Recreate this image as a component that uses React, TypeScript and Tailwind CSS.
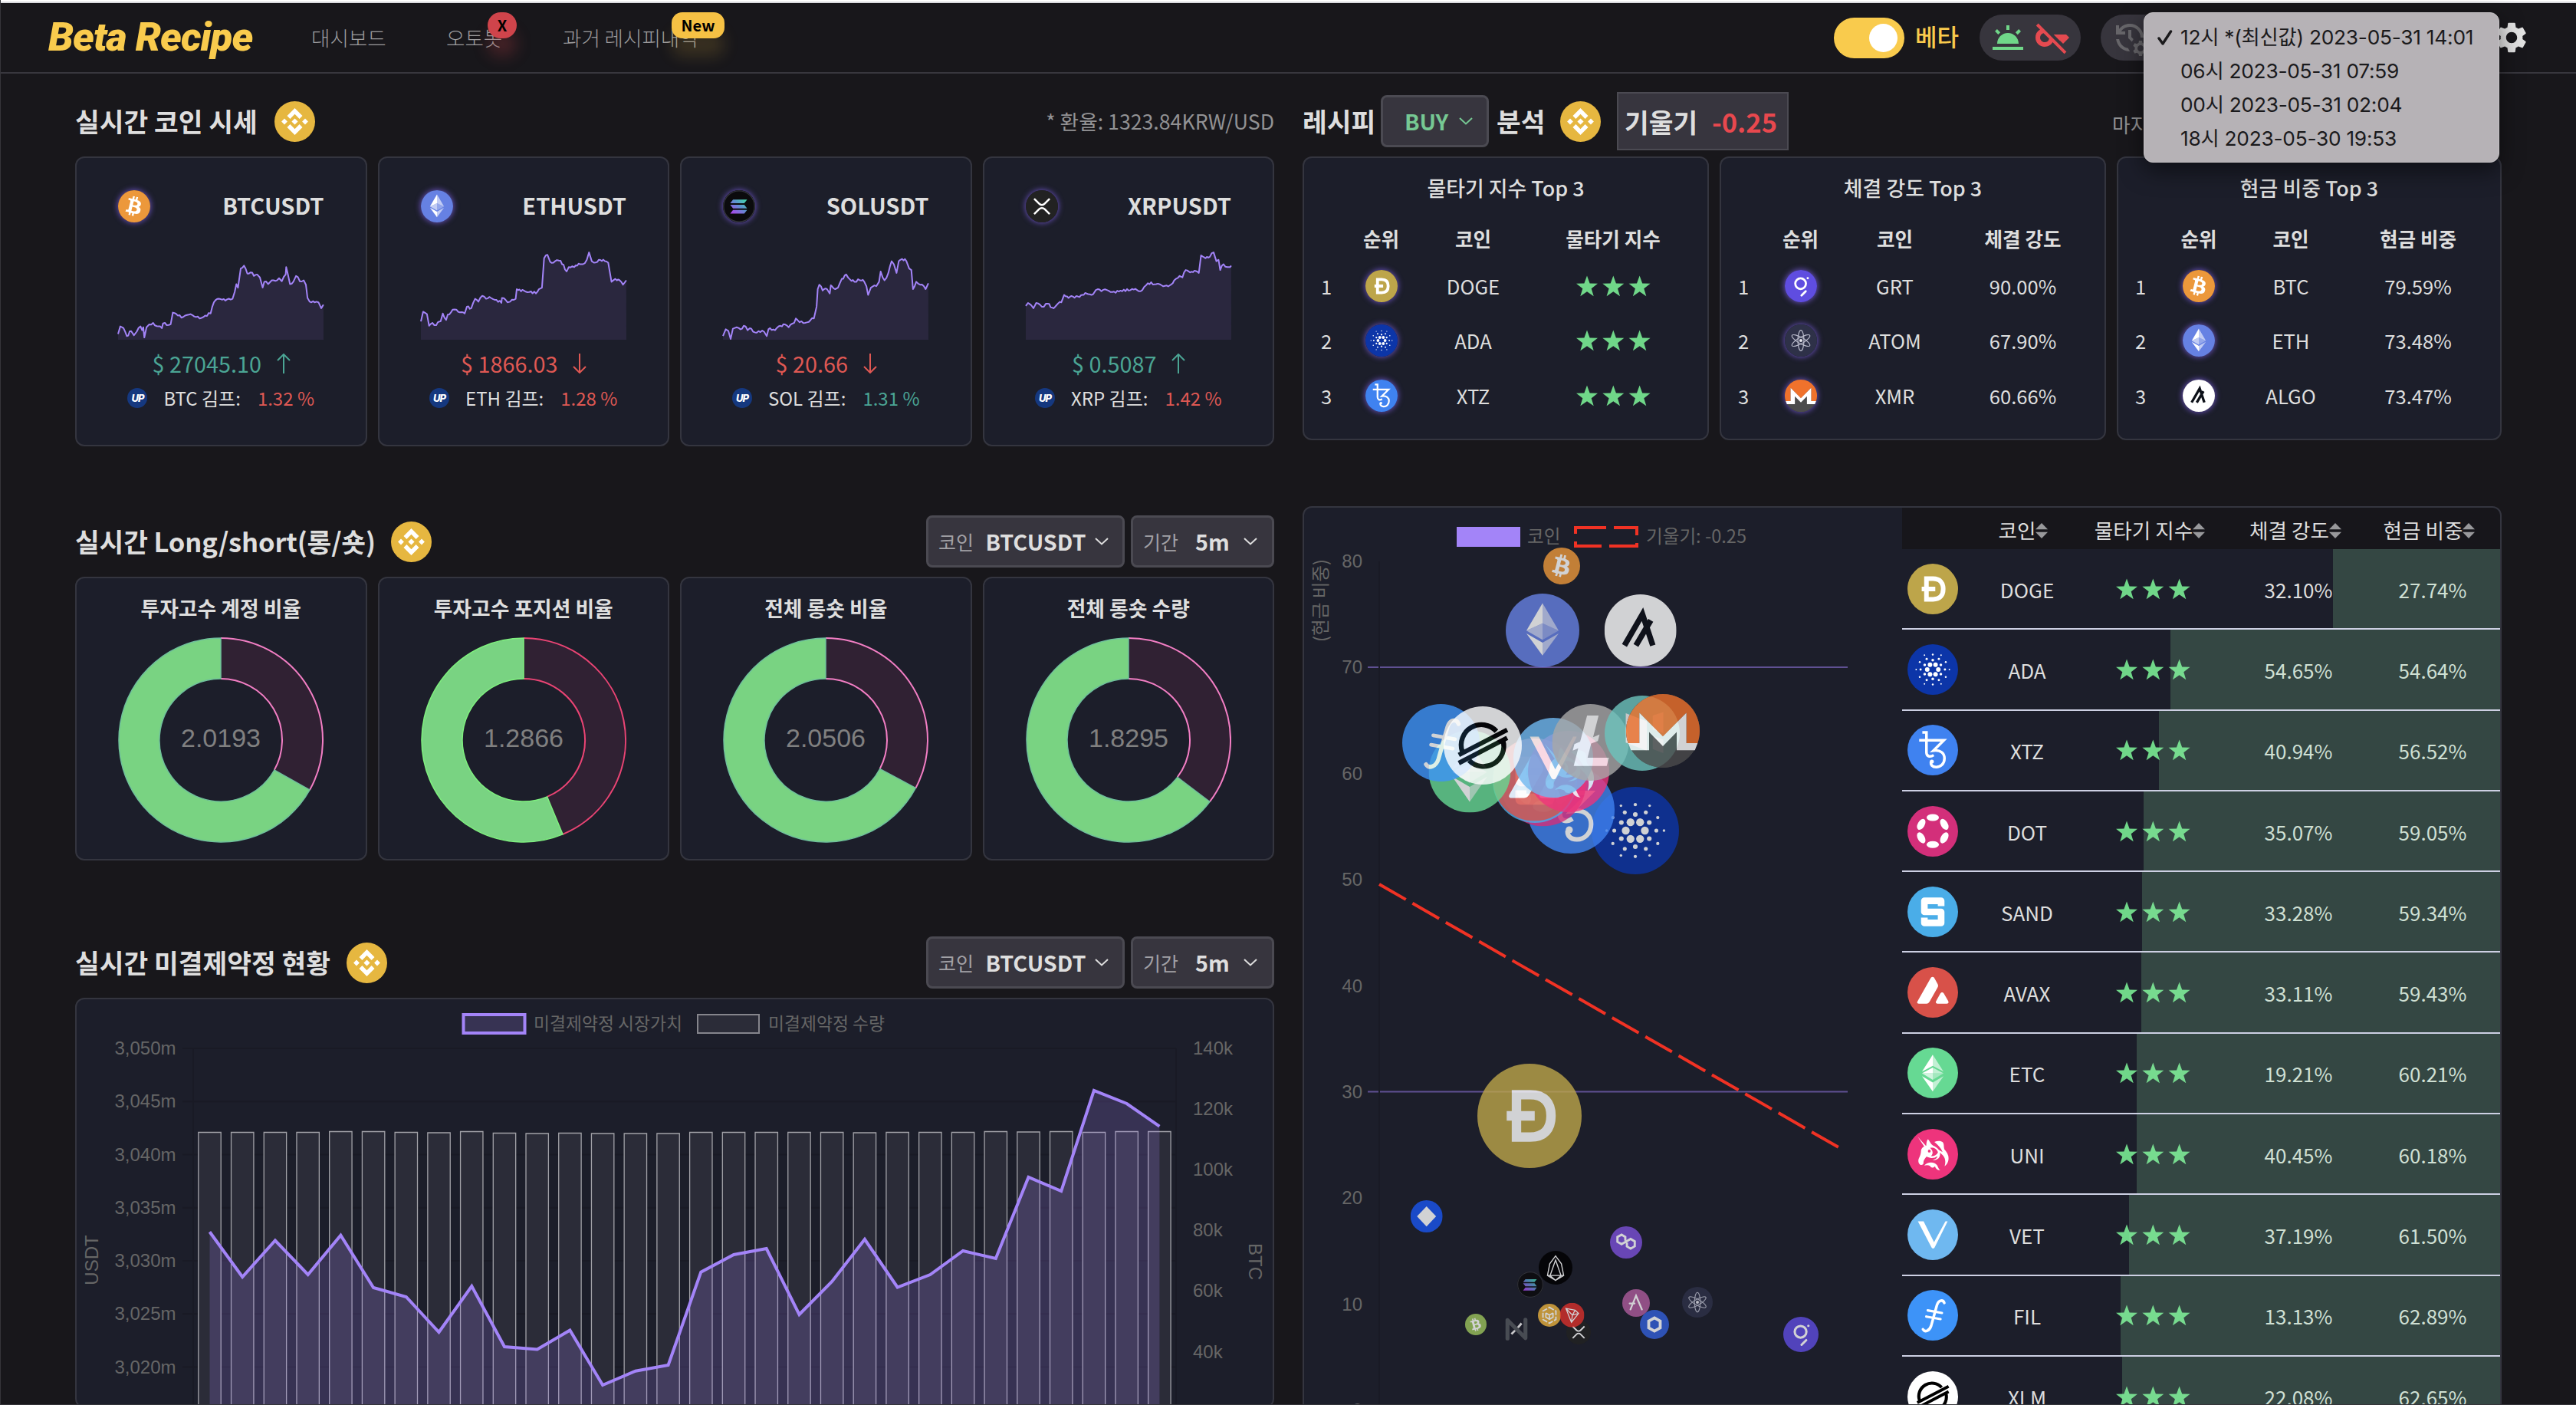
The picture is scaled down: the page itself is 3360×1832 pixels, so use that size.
import React from 'react';
import { MdKeyOff, MdManageHistory, MdSettings, MdWbTwilight } from 'react-icons/md';
import { FaBtc } from 'react-icons/fa';

const ring = (n: number, r: number, s: number, off = 0) =>
  Array.from({ length: n }, (_, i) => {
    const a = ((i * 360) / n + off) * (Math.PI / 180);
    return <circle key={`${r}-${off}-${i}`} cx={16 + r * Math.cos(a)} cy={16 + r * Math.sin(a)} r={s} />;
  });

const BG: Record<string, string> = {
  BTC: '#ec983b', ETH: '#6681e3', SOL: '#0b0b0d', XRP: '#222222', DOGE: '#bda54a', ADA: '#0c35a8', XTZ: '#3f82f0',
  GRT: '#5f4de0', ATOM: '#2e3148', ALGO: '#ffffff', DOT: '#d32f7a', SAND: '#4aade8', AVAX: '#d85149', ETC: '#66d993',
  UNI: '#ee347c', VET: '#6fb8f0', FIL: '#3d93f8', XLM: '#ffffff', LTC: '#a8a8a8', NEO: '#6cc4bd', MANA: '#1a56f0',
  MATIC: '#7c50d8', EOS: '#000000', BCH: '#9cc45c', BNB: '#e8b13f', TRX: '#d8302c', AR: '#ad5c9c', LINK: '#335fd8',
};

function glyph(id: string) {
  const s = { fill: 'none', stroke: '#fff', strokeLinecap: 'butt' as const, strokeLinejoin: 'miter' as const };
  switch (id) {
    case 'BTC':
      return <g transform="rotate(14 16 16)"><FaBtc size={19.5} x={6.2} y={6.2} color="#fff" /></g>;
    case 'BCH':
      return <g transform="rotate(-14 16 16)"><FaBtc size={19.5} x={6.2} y={6.2} color="#fff" /></g>;
    case 'ETH':
      return (
        <g fill="#fff">
          <path d="M16 4.2v8.7l-7 3.2z" /><path d="M16 4.2v8.7l7 3.2z" opacity=".6" />
          <path d="M16 12.9v7.2l-7-4z" opacity=".6" /><path d="M16 12.9v7.2l7-4z" opacity=".3" />
          <path d="M9 17.3l7 4v5.6z" /><path d="M23 17.3l-7 4v5.6z" opacity=".6" />
        </g>
      );
    case 'ETC':
      return (
        <g fill="#fff">
          <path d="M16 4.5v7l-6.8 3.6z" /><path d="M16 4.5v7l6.8 3.6z" opacity=".6" />
          <path d="M16 12.6v3.6H9.2z" /><path d="M16 12.6v3.6h6.8z" opacity=".6" />
          <path d="M9.2 16.2H16v4.2z" opacity=".7" /><path d="M22.8 16.2H16v4.2z" opacity=".4" />
          <path d="M9.2 18l6.8 4v5.8z" /><path d="M22.8 18L16 22v5.8z" opacity=".6" />
        </g>
      );
    case 'SOL':
      return (
        <g>
          <defs>
            <linearGradient id="sol" x1="0" y1="1" x2="1" y2="0"><stop offset="0" stopColor="#b43df0" /><stop offset=".55" stopColor="#5f8fd0" /><stop offset="1" stopColor="#3fe0a8" /></linearGradient>
          </defs>
          <circle cx="16" cy="16" r="15.4" fill="none" stroke="#34353c" strokeWidth="1" />
          <path d="M10 9.3h14l-2.8 3.6H7.2zM7.2 14.4h14l2.8 3.6H10zM10 19.6h14l-2.8 3.6H7.2z" fill="url(#sol)" />
        </g>
      );
    case 'XRP':
      return (
        <g {...s} strokeWidth="1.9">
          <path d="M8.3 8.5l5 5a3.8 3.8 0 0 0 5.4 0l5-5" /><path d="M8.3 23.8l5-5a3.8 3.8 0 0 1 5.4 0l5 5" />
        </g>
      );
    case 'DOGE':
      return <g {...s} strokeWidth="2.9"><path d="M12 9.5h4.2c4.4 0 6.4 2.5 6.4 6.5s-2 6.5-6.4 6.5H12zM9 16h8.6" /></g>;
    case 'ADA':
      return (
        <g fill="#fff">
          {ring(6, 3.5, 1.45)}{ring(6, 5.9, 0.86, 30)}{ring(6, 7.7, 0.72)}{ring(6, 9.5, 0.6, 30)}{ring(6, 10.5, 0.48)}
        </g>
      );
    case 'XTZ':
      return (
        <g {...s} strokeWidth="1.7">
          <path d="M9.4 4.9h2.600v12.500c0 2.600 2.200 3.400 4.600 1.800M7.400 9.800H23l-6.600 6.600c4.600-.6 7 1.600 7 4.800 0 3.600-2.600 5.600-5.200 5.600-2.600 0-3.600-1.600-3.400-3.200" />
          <circle cx="15.400" cy="23.300" r="1.300" fill="#fff" stroke="none" />
        </g>
      );
    case 'GRT':
      return (
        <g {...s} strokeWidth="2.1" strokeLinecap="round">
          <circle cx="15.7" cy="13.6" r="5.3" /><path d="M16.6 25.4l4.2-4.2" /><circle cx="22.8" cy="8.2" r="1.1" fill="#fff" stroke="none" />
        </g>
      );
    case 'ATOM':
      return (
        <g {...s} strokeWidth=".9" stroke="#b9bbcb">
          <ellipse cx="16" cy="16" rx="3" ry="10.2" /><ellipse cx="16" cy="16" rx="3" ry="10.2" transform="rotate(60 16 16)" />
          <ellipse cx="16" cy="16" rx="3" ry="10.2" transform="rotate(120 16 16)" /><circle cx="16" cy="16" r="1.6" fill="#e6e7ee" stroke="none" />
        </g>
      );
    case 'XMR':
      return (
        <g>
          <circle cx="16" cy="16" r="16" fill="#4c4c4c" />
          <path d="M16 0a16 16 0 0 0-15.1 21.3h4.9V8.2L16 18.6 26.2 8.2v13.1h4.9A16 16 0 0 0 16 0z" fill="#f0722c" />
          <path d="M.9 21.3h4.9V8.2L16 18.4 26.2 8.2v13.1h4.9l-1.2 3.1H22V16.5l-6 6.2-6-6.2v7.9H2.1z" fill="#fff" />
        </g>
      );
    case 'ALGO':
      return <g {...s} stroke="#0c1018" strokeWidth="2.5"><path d="M8.9 22.7l8-13.9 4.6 13.9M14 22.7l6.6-11.2" /></g>;
    case 'DOT':
      return (
        <g fill="#fff">
          <ellipse cx="16" cy="7.3" rx="3.9" ry="2.2" /><ellipse cx="16" cy="24.4" rx="3.9" ry="2.2" />
          {[[8.7, 11.6, 30], [23.3, 11.6, -30], [8.7, 20.1, -30], [23.3, 20.1, 30]].map(([x, y, r]) => (
            <ellipse key={`${x}${y}`} cx={x} cy={y} rx="2.2" ry="3.8" transform={`rotate(${r} ${x} ${y})`} />
          ))}
        </g>
      );
    case 'SAND':
      return <g {...s} strokeWidth="4.2"><path d="M21.300 12.400V9H10.700v7h10.600v7H10.700v-3.400" strokeLinejoin="round" /></g>;
    case 'AVAX':
      return <path d="M15.9 6.2c-.6 0-1 .4-1.4 1.1L6.4 21.6c-.6 1-.2 1.5.8 1.5h4.8c1 0 1.5-.5 2-1.3l5-8.8c.5-.9.5-1.6 0-2.5l-1.8-3.2c-.4-.7-.7-1.1-1.3-1.1zM21.9 16c-.5 0-.9.3-1.2.9l-2.5 4.4c-.6 1.1-.2 1.8.8 1.8h5.8c1 0 1.5-.7.9-1.8l-2.6-4.4c-.3-.6-.7-.9-1.2-.9z" fill="#fff" />;
    case 'UNI':
      return (
        <g>
          <path d="M6.500 5l6 6.600-1 .9zM11.900 10.500c.1-1.700.2-3 1-3.900 1.300 1 1.500 2.900 3.300 4 2.900 1.200 4.700 3.200 4.400 5.900-.4 2.600-2.700 3.400-4.900 3.300 1.500-.4 3.100-1.200 3.200-2.600-1.900 1.600-5 1.500-6.800.3-1.100 1.300-2.100 2.400-2 4 .1 1-.8 1.500-1.700 1.300-1.500-.6-1.900-2.800-1.100-4.400.9-1.600 1.200-3 1.300-4.700.2-1.700 1.700-2.700 3.300-3.200z" fill="#fff" />
          <circle cx="13.800" cy="14" r=".9" fill="#ee347c" />
          <path d="M14.300 12c2.500-.6 4.300.6 5 2.800-.8 1.900-2.600 2.600-4.400 2.400 1.500-1.400 1.300-3.600-.6-5.200z" fill="#ee347c" />
          <path d="M17 8.300c2-1 4.200-.9 5.400.2.900 1.200.4 2.800.9 4.300 1.800 2 3 4 2.600 6.800-.3 1.700-1.100 3-2.400 4 .8-2.900.5-5.100-1.200-7-1.500-1.600-3.400-2.400-4.400-4.200 1.600.9 3 1.400 4.300 2.300-.9-2.400-2.800-4.600-5.200-6.400z" fill="#fff" />
          <path d="M10.600 23.200c1.700-1.900 4.200-2.500 6.600-1.500 2.200 1 2 3.200 3.500 4.500-1.900-.1-2.900-1.200-3.300-2.600-.9 1.200-2.600 1.200-3.100-.2-1.100-.6-2.500-.6-3.700-.2z" fill="#fff" />
        </g>
      );
    case 'VET':
      return <path d="M6.6 7.500h3.600l6.600 13.200L24 7.500h1.400L17.200 24c-.4.900-1.600.9-2 0z" fill="#fff" />;
    case 'FIL':
      return (
        <g {...s} strokeWidth="1.500" strokeLinecap="round">
          <path d="M23.300 8.200c-.8-2.200-3.500-2-4.600 1.200L15 22.600c-1 3.200-3.900 4.400-5.200 2.300" strokeWidth="1.700" /><path d="M12.800 12.900l9 1.600M11.900 16.800l9 1.600" />
        </g>
      );
    case 'XLM':
      return (
        <g {...s} stroke="#000" strokeWidth="2">
          <path d="M7.600 18.400A8.300 8.300 0 0 1 21.600 10.200M24.300 14A8.300 8.300 0 0 1 10.400 22.100" /><path d="M6.200 21.200L26 10.900M6.200 24.500L26 14.200" transform="translate(0 -1.300)" strokeWidth="1.900" />
        </g>
      );
    case 'LTC':
      return <g fill="#fff"><path d="M14.600 4.800h4.800l-2.300 9 2.700-1.100-.7 2.700-2.800 1.100-1.500 5.900h8.900l-.9 3.400H9l1.900-7.300-2.300.9.700-2.700 2.400-1z" /></g>;
    case 'NEO':
      return <g fill="#f0f0f0"><path d="M9 7.500l9 3.400v12.600L9 20z" /><path d="M20.500 8.500L25 7v9l-4.500-1.600z" opacity=".6" /><path d="M20.500 17.200L25 18.800v5.700l-4.500-1.700z" opacity=".7" /></g>;
    case 'MANA':
      return <path d="M16 6l9.500 10L16 26 6.500 16z" fill="#fff" />;
    case 'MATIC':
      return (
        <g {...s} strokeWidth="2.200">
          <path d="M15.200 14.200v-3.600L11.500 8.300 7.400 10.600v4.800l4.100 2.400 9-5.200 4.100 2.400v4.800l-4.100 2.400-3.700-2.300v-3.700" />
        </g>
      );
    case 'EOS':
      return <g {...s} strokeWidth="1"><path d="M16 4.800l-5.500 7.400L8.300 23.400 16 28l7.700-4.600-2.200-11.200zM16 8.800l-5.200 14.600L16 28l5.200-4.600zM8.300 23.400h15.400" /></g>;
    case 'BNB':
      return <g {...s} strokeWidth="2"><path d="M16 5l9 5.200v11.600L16 27l-9-5.200V10.200z" strokeDasharray="7 2" /><path d="M11 12.800l5 2.900 5-2.900M16 15.700v5.600M11 12.800v5.800l5 2.900 5-2.900v-5.800" strokeWidth="1.800" /></g>;
    case 'TRX':
      return <g {...s} strokeWidth="1.300"><path d="M8 7.500l12 2.200 4.500 4.200L15.200 25.500zM8 7.500l8.500 8.500L15.200 25.500M16.500 16l8-2.100M16.500 16L20 9.700" /></g>;
    case 'AR':
      return <g {...s} strokeWidth="2" strokeLinecap="round"><path d="M9.500 23.500L16 7.500l6.800 16M8.500 16.500h5.800" /></g>;
    case 'LINK':
      return <g {...s} strokeWidth="3.200"><path d="M16 8.800l6.300 3.600v7.200L16 23.200l-6.300-3.600v-7.200z" /></g>;
    default:
      return null;
  }
}

function Coin({ id, ...rest }: { id: string } & React.SVGProps<SVGSVGElement>) {
  if (id === 'NEAR') {
    return (
      <svg viewBox="0 0 32 32" {...rest}>
        <path d="M3.500 29V3.500L28.500 28.500V3" fill="none" stroke="#54585e" strokeWidth="5.500" strokeLinejoin="round" strokeLinecap="round" />
        <path d="M9 23l5-5M18 14l5-6" stroke="#f2f2f2" strokeWidth="3" />
      </svg>
    );
  }
  return (
    <svg viewBox="0 0 32 32" {...rest}>
      <circle cx="16" cy="16" r="16" fill={BG[id] ?? '#4c4c4c'} />
      {glyph(id)}
    </svg>
  );
}

function SmallCoin({ id }: { id: string }) {
  return (
    <span className="inline-flex h-[42px] w-[42px] rounded-full shadow-[0_0_7px_1px_rgba(122,92,220,0.75)]">
      <Coin id={id} className="h-full w-full" />
    </span>
  );
}

function BinanceBadge({ className = '' }: { className?: string }) {
  return (
    <svg viewBox="0 0 53 53" className={`h-[53px] w-[53px] shrink-0 ${className}`}>
      <circle cx="26.500" cy="26.500" r="26.500" fill="#e6b740" />
      <g fill="#fff">
        <path d="M26.500 9l10 10-3.900 4-6.100-6.200-6.100 6.200-3.900-4z" />
        <path d="M26.500 44l10-10-3.900-4-6.100 6.200-6.100-6.200-3.900 4z" />
        <path d="M26.500 22.400l4.100 4.100-4.100 4.100-4.100-4.100zM13 22.600l3.900 3.900-3.900 3.900-3.900-3.900zM40 22.600l3.900 3.900-3.900 3.900-3.900-3.900z" />
      </g>
    </svg>
  );
}

function Chevron() {
  return (
    <svg viewBox="0 0 18 10" className="h-[10px] w-[18px]" fill="none" stroke="currentColor" strokeWidth="2">
      <path d="M1 1l8 7.500L17 1" />
    </svg>
  );
}

const TITLE = 'text-[34.500px] font-bold text-[#dedede] whitespace-nowrap leading-none';
const CARD = 'rounded-[12px] border-2 border-[#34353f] bg-[#1c1e2a]';
const SELECT = 'flex h-[68px] items-center rounded-[8px] border-[3px] border-[#4b4a52] bg-[#37353e] whitespace-nowrap leading-none';

const SPARK: Record<string, { x0: number; pts: number[] }> = {
  BTC: { x0: 216, pts: [216,1138,220,1112,226,1118,232,1145,240,1128,245,1142,250,1130,257,1112,260,1125,262,1115,264,1150,268,1115,273,1105,280,1100,290,1112,296,1118,298,1102,305,1108,312,1105,316,1065,325,1075,335,1080,345,1072,355,1078,365,1085,375,1075,385,1068,391,1030,400,1018,415,1020,425,1018,429,995,432,968,435,980,440,915,446,905,452,932,458,928,464,940,470,935,475,945,480,980,483,960,490,968,500,955,510,948,515,958,522,935,523,910,530,968,536,960,541,940,548,958,555,955,559,970,562,1015,566,1028,575,1030,582,1030,587,1050,591,1038] },
  ETH: { x0: 767, pts: [767,1095,771,1062,778,1070,782,1110,788,1100,795,1108,803,1095,807,1068,813,1090,816,1072,825,1055,835,1062,847,1068,851,1045,859,1050,866,1018,872,1028,879,1008,886,1018,895,1015,905,1022,914,1032,915,1015,925,1030,930,1028,940,1018,942,985,955,990,965,995,977,1000,988,980,992,880,998,868,1003,892,1012,890,1022,888,1033,925,1037,910,1047,910,1055,898,1063,900,1070,885,1074,860,1079,890,1083,895,1092,885,1103,890,1109,895,1115,960,1122,950,1130,955,1136,970,1142,955] },
  SOL: { x0: 1320, pts: [1320,1145,1325,1122,1330,1128,1334,1155,1338,1120,1345,1115,1352,1122,1358,1110,1365,1125,1369,1118,1375,1130,1385,1128,1395,1130,1400,1145,1403,1122,1415,1125,1425,1110,1433,1105,1440,1115,1450,1100,1453,1085,1460,1098,1470,1100,1480,1090,1486,1085,1491,1045,1493,985,1496,970,1502,990,1510,985,1515,1000,1517,972,1525,985,1530,980,1537,950,1545,935,1552,952,1560,960,1570,955,1578,960,1582,975,1585,1005,1590,980,1600,975,1605,960,1608,925,1615,955,1622,930,1628,890,1632,900,1637,930,1641,890,1647,882,1655,890,1660,915,1664,920,1667,985,1673,960,1680,970,1687,975,1690,985,1695,965] },
  XRP: { x0: 332, pts: [332,1042,336,1032,342,1040,346,1050,351,1032,358,1038,365,1045,372,1035,380,1048,388,1040,397,1030,402,1005,410,1015,418,1010,430,1012,443,1000,455,1002,460,988,470,992,480,988,490,995,505,990,520,990,535,988,545,988,555,965,570,968,580,972,595,972,603,955,613,940,618,945,624,920,632,928,640,922,648,930,652,870,660,880,668,875,675,860,680,890,684,885,687,920,693,900,700,910,705,910,707,905] },
};

function Sparkline({ id }: { id: string }) {
  const { x0, pts } = SPARK[id];
  const out: string[] = [];
  let n = 7;
  for (let i = 0; i < pts.length; i += 2) {
    const x = (pts[i] - x0) / 1.4;
    const y = (pts[i + 1] - 857) / 2.613 + 1;
    if (i > 0) {
      const px = (pts[i - 2] - x0) / 1.4;
      const py = (pts[i - 1] - 857) / 2.613 + 1;
      const k = Math.floor((x - px) / 1.8);
      for (let j = 1; j < k; j++) {
        n = (n * 73 + 41) % 101;
        out.push(`${(px + ((x - px) * j) / k).toFixed(1)},${(py + ((y - py) * j) / k + (n / 101 - 0.5) * 4).toFixed(1)}`);
      }
    }
    out.push(`${x.toFixed(1)},${y.toFixed(1)}`);
  }
  return (
    <svg viewBox="0 0 268 116" className="block h-[116px] w-[268px] overflow-visible">
      <polygon points={`0,116 ${out.join(' ')} 268,116`} fill="#2a273e" />
      <polyline points={out.join(' ')} fill="none" stroke="#a384f8" strokeWidth="2" strokeLinejoin="round" />
    </svg>
  );
}

const PRICES = [
  { id: 'BTC', price: '27045.10', up: true, kimp: '1.32 %', pos: false },
  { id: 'ETH', price: '1866.03', up: false, kimp: '1.28 %', pos: false },
  { id: 'SOL', price: '20.66', up: false, kimp: '1.31 %', pos: true },
  { id: 'XRP', price: '0.5087', up: true, kimp: '1.42 %', pos: false },
];

function PriceCard({ id, price, up, kimp, pos }: (typeof PRICES)[number]) {
  return (
    <div className={`${CARD} flex h-[378px] flex-col px-[54px] pt-[42px]`}>
      <div className="flex h-[42px] items-center justify-between">
        <SmallCoin id={id} />
        <span className="pb-[2px] text-[29.100px] font-bold leading-none text-[#dedede]">{id}USDT</span>
      </div>
      <div className="mt-[37px]"><Sparkline id={id} /></div>
      <div className={`mt-[11px] flex h-[40px] items-center justify-center pl-[1px] text-[28.800px] leading-none whitespace-nowrap ${up ? 'text-[#4ba594]' : 'text-[#df5853]'}`}>
        <span>$ {price}</span>
        <svg viewBox="0 0 18 26" className="ml-[20px] h-[26px] w-[18px]" fill="none" stroke="currentColor" strokeWidth="2">
          {up ? <path d="M9 26V1M1 9l8-8 8 8" /> : <path d="M9 0v25M1 17l8 8 8-8" />}
        </svg>
      </div>
      <div className="mt-[9px] flex h-[32px] items-center justify-center text-[24px] leading-none whitespace-nowrap text-[#dedede]">
        <span className="flex h-[26px] w-[26px] items-center justify-center rounded-full bg-[#15387f] font-['Inter'] text-[13px] font-extrabold italic tracking-[-1px] text-white">UP</span>
        <span className="ml-[21px]">{id} 김프:</span>
        <span className={`ml-[22px] ${pos ? 'text-[#4ba594]' : 'text-[#df5853]'}`}>{kimp}</span>
      </div>
    </div>
  );
}

const DONUTS = [
  { name: '투자고수 계정 비율', v: 2.0193, line: '#f27ec4', edge: '#6fc09c' },
  { name: '투자고수 포지션 비율', v: 1.2866, line: '#ea4474', edge: '#7ff07f' },
  { name: '전체 롱숏 비율', v: 2.0506, line: '#f27ec4', edge: '#6fc09c' },
  { name: '전체 롱숏 수량', v: 1.8295, line: '#f27ec4', edge: '#6fc09c' },
];

function Donut({ v, line, edge }: { v: number; line: string; edge: string }) {
  const a = (2 * Math.PI) / (1 + v);
  const R = 133;
  const r = 80;
  const p = (rad: number, t: number) => `${(134 + rad * Math.sin(t)).toFixed(2)} ${(135 - rad * Math.cos(t)).toFixed(2)}`;
  return (
    <svg viewBox="0 0 268 270" className="h-[270px] w-[268px]">
      <path d={`M${p(R, 0)}A${R} ${R} 0 0 1 ${p(R, a)}L${p(r, a)}A${r} ${r} 0 0 0 ${p(r, 0)}z`} fill="#302133" />
      <path d={`M${p(R, 0)}A${R} ${R} 0 0 1 ${p(R, a)}M${p(r, a)}A${r} ${r} 0 0 0 ${p(r, 0)}`} fill="none" stroke={line} strokeWidth="2" />
      <path d={`M${p(R, a)}A${R} ${R} 0 1 1 ${p(R, 0)}L${p(r, 0)}A${r} ${r} 0 1 0 ${p(r, a)}z`} fill="#79d382" stroke={edge} strokeWidth="1.500" />
      <text x="134" y="144" textAnchor="middle" fontFamily="Liberation Sans, Arial, sans-serif" fontSize="34" fill="#808080">{v.toFixed(4)}</text>
    </svg>
  );
}

function Selects() {
  return (
    <div className="ml-auto flex gap-[8px]">
      <div className={`${SELECT} w-[259px] pl-[13px]`}>
        <span className="w-[60px] text-[25px] text-[#a2a1a6]">코인</span>
        <span className="w-[134px] text-center text-[28.800px] font-bold text-[#dedede]">BTCUSDT</span>
        <span className="ml-[10px] text-[#dedede]"><Chevron /></span>
      </div>
      <div className={`${SELECT} w-[187px] pl-[13px]`}>
        <span className="w-[68px] text-[25px] text-[#a2a1a6]">기간</span>
        <span className="w-[44px] text-center text-[28.800px] font-bold text-[#dedede]">5m</span>
        <span className="ml-[19px] text-[#dedede]"><Chevron /></span>
      </div>
    </div>
  );
}

const OI = [1606.3,1665,1617.5,1662,1610.7,1679,1691,1737,1677,1756,1759.5,1734.5,1806,1787.7,1780,1658.7,1636,1628,1714,1671,1616,1678.5,1662,1631,1641,1535,1553,1422,1439,1468.7];
const BAR_TOP = [1476.5,1476.5,1476.5,1476.5,1475.5,1475.5,1476.5,1477,1475.5,1477.5,1478,1477.5,1478,1478,1478,1476.5,1476.5,1476.5,1476.5,1476.5,1477,1476.5,1476.5,1476.5,1475.5,1476,1475.5,1476.5,1475.5,1475.5];

function OpenInterestChart() {
  const cx = (i: number) => 273.5 + i * 42.72;
  const line = OI.map((y, i) => `${cx(i).toFixed(1)},${y}`).join(' ');
  return (
    <svg viewBox="100 1303 1560 531" className="block h-[531px] w-[1560px]" fontFamily="Liberation Sans, Arial, sans-serif" fontSize="24" fill="#666">
      {Array.from({ length: 7 }, (_, i) => (
        <g key={i}>
          <path d={`M238 ${1367 + i * 69.25}H1534`} stroke="#191a25" strokeWidth="2" />
          <text x="229.500" y={1375 + i * 69.25} textAnchor="end">{`3,0${50 - i * 5}m`}</text>
        </g>
      ))}
      <path d="M252 1367V1840M1534 1367V1840" stroke="#191a25" strokeWidth="2" />
      {Array.from({ length: 6 }, (_, i) => (
        <text key={i} x="1556" y={1375 + i * 79.1}>{`${140 - i * 20}k`}</text>
      ))}
      {BAR_TOP.map((y, i) => (
        <path key={i} d={`M${(cx(i) - 14.7).toFixed(2)} 1850V${y}h29.400V1850`} fill="#2b2c38" stroke="#a2a2a8" strokeWidth="1.300" />
      ))}
      <polygon points={`273.500,1850 ${line} 1512.400,1850`} fill="#a384f8" fillOpacity=".2" />
      <polyline points={line} fill="none" stroke="#a384f8" strokeWidth="4" />
      <rect x="604.500" y="1323" width="80" height="24" fill="#373353" stroke="#a384f8" strokeWidth="4" />
      <rect x="910" y="1323" width="80" height="24" fill="#2b2c38" stroke="#85858c" strokeWidth="2" />
      <g fontFamily="Noto Sans CJK KR, sans-serif" fontSize="22.800">
        <text x="696" y="1342.500">미결제약정 시장가치</text>
        <text x="1002" y="1342.500">미결제약정 수량</text>
      </g>
      <text transform="translate(128 1643) rotate(-90)" textAnchor="middle">USDT</text>
      <text transform="translate(1629 1645) rotate(90)" textAnchor="middle">BTC</text>
    </svg>
  );
}

const BUBBLES: [string, number, number, number][] = [
  ['ADA', 2133, 1083, 57], ['XTZ', 2049, 1056, 57], ['DOT', 2013, 1022, 55.5], ['SAND', 2002, 1018, 55], ['AVAX', 2001.5, 1016.5, 54],
  ['ETC', 1917, 1006, 53.5], ['UNI', 2046, 1006, 53], ['VET', 2026, 988, 52], ['FIL', 1879.5, 968.6, 50.5], ['XLM', 1934, 972, 51],
  ['LTC', 2074.5, 968, 50], ['NEO', 2142, 956, 49], ['XMR', 2169, 953, 48], ['ALGO', 2139.7, 822, 47], ['ETH', 2012, 822, 48], ['BTC', 2037, 738, 24],
  ['DOGE', 1995, 1455, 68], ['MANA', 1860.7, 1586, 21], ['MATIC', 2121, 1620, 21], ['EOS', 2029, 1653, 22], ['SOL', 1996, 1675, 17],
  ['BCH', 1925, 1727, 14], ['NEAR', 1978, 1733, 15], ['BNB', 2021, 1715, 15], ['XRP', 2059, 1737, 16], ['TRX', 2050.5, 1714.7, 16], ['AR', 2134, 1699, 18],
  ['LINK', 2158, 1727, 19], ['ATOM', 2214, 1698, 20], ['GRT', 2349, 1740, 23],
];

function ScatterChart() {
  return (
    <svg viewBox="1701 662 780 1172" className="block h-[1172px] w-[780px] shrink-0" fontFamily="Liberation Sans, Arial, sans-serif" fontSize="24" fill="#666">
      {Array.from({ length: 9 }, (_, i) => (
        <text key={i} x="1777" y={740 + i * 138.4} textAnchor="end">{80 - i * 10}</text>
      ))}
      <path d="M1799 732V1840" stroke="#191a25" strokeWidth="2" />
      <path d="M1784 870H1798M1800 870H2410M1784 1423.500H1798M1800 1423.500H2410" stroke="#5f5092" strokeWidth="2" />
      <path d="M1799 1153L2399 1496.500" stroke="#f03224" strokeWidth="4" strokeDasharray="40 10" />
      {BUBBLES.map(([id, x, y, r]) => (
        <Coin key={id} id={id} x={x - r} y={y - r} width={r * 2} height={r * 2} opacity={0.8} />
      ))}
      <rect x="1900" y="687" width="83" height="26" fill="#a384f8" />
      <rect x="2055" y="688" width="80" height="24" fill="none" stroke="#f03224" strokeWidth="4" strokeDasharray="40 10" />
      <g fontFamily="Noto Sans CJK KR, sans-serif" fontSize="23.600">
        <text x="1992" y="708">코인</text>
        <text x="2147" y="708">기울기: -0.25</text>
        <text transform="translate(1731 783) rotate(-90)" textAnchor="middle">(현금 비중)</text>
      </g>
    </svg>
  );
}

function Stars() {
  return (
    <svg viewBox="0 0 97 28" className="h-[28px] w-[97px]" fill="#70d789">
      {[14, 48.3, 82.6].map((x) => (
        <path key={x} transform={`translate(${x} 15)`} d="M0-14.500L3.600-4.500 14-4.300 5.700 2.200 8.700 12.300 0 6.300-8.700 12.300-5.700 2.200-14-4.300-3.600-4.500z" />
      ))}
    </svg>
  );
}

const TOPS = [
  { title: '물타기 지수', cols: 'grid-cols-[58px_85px_155px_210px]', rows: [['DOGE', '★'], ['ADA', '★'], ['XTZ', '★']] },
  { title: '체결 강도', cols: 'grid-cols-[58px_91px_155px_179px]', rows: [['GRT', '90.00%'], ['ATOM', '67.90%'], ['XMR', '60.66%']] },
  { title: '현금 비중', cols: 'grid-cols-[58px_94px_146px_186px]', rows: [['BTC', '79.59%'], ['ETH', '73.48%'], ['ALGO', '73.47%']] },
];

const ROWS = [
  ['DOGE', '32.10', '27.74'], ['ADA', '54.65', '54.64'], ['XTZ', '40.94', '56.52'], ['DOT', '35.07', '59.05'], ['SAND', '33.28', '59.34'],
  ['AVAX', '33.11', '59.43'], ['ETC', '19.21', '60.21'], ['UNI', '40.45', '60.18'], ['VET', '37.19', '61.50'], ['FIL', '13.13', '62.89'], ['XLM', '22.08', '62.65'],
];

function SortHead({ children }: { children: React.ReactNode }) {
  return (
    <span className="flex items-center justify-center whitespace-nowrap text-[26.600px] leading-none">
      {children}
      <svg viewBox="0 0 16 20" className="h-[20px] w-[16px] shrink-0" fill="#98989b"><path d="M8 0l8 8.300H0zM8 20l8-8.300H0z" /></svg>
    </span>
  );
}

function CoinTable() {
  return (
    <div className="w-[780px] shrink-0 text-[#dedede]">
      <div className="grid h-[54px] grid-cols-[80px_156px_174px_206px_143px] items-center rounded-tr-[10px] bg-[#17161b] pt-[5px]">
        <span />
        <SortHead>코인</SortHead>
        <SortHead>물타기 지수</SortHead>
        <SortHead>체결 강도</SortHead>
        <SortHead>현금 비중</SortHead>
      </div>
      {ROWS.map(([id, power, cash]) => (
        <div key={id} className="relative grid h-[105.300px] grid-cols-[79px_168px_161px_218px_132px] items-center justify-items-center border-b-2 border-[#cdd0e3] text-[26px] leading-none">
          <Coin id={id} className="h-[66px] w-[66px]" />
          <span className="pt-[2px]">{id}</span>
          <Stars />
          <span className="pt-[2px]">{power}%</span>
          <span className="pt-[2px]">{cash}%</span>
          <div className="absolute inset-y-0 right-0 bg-[#94eba8]/20" style={{ width: Number(cash) * 7.87 }} />
        </div>
      ))}
    </div>
  );
}

const SNAPSHOTS = ['12시 *(최신값) 2023-05-31 14:01', '06시 2023-05-31 07:59', '00시 2023-05-31 02:04', '18시 2023-05-30 19:53'];

function Header() {
  return (
    <header className="relative flex h-[92px] items-center border-b-2 border-[#38373e] whitespace-nowrap">
      <div className="ml-[62px] w-[343px]">
        <span className="inline-block origin-left scale-x-[1.015] font-['Roboto'] text-[52px] font-black italic leading-none tracking-[-1px] text-[#f9cb4d]">Beta Recipe</span>
      </div>
      <nav className="flex items-center text-[26.500px] font-light leading-none text-[#9c9c9e]">
        <span className="w-[176px]">대시보드</span>
        <span className="relative w-[152px]">
          오토봇
          <span className="absolute -top-[20px] left-[54px] flex h-[34px] w-[38px] items-center justify-center rounded-[17px] bg-[#cf444b] text-[20px] font-bold text-black shadow-[0_24px_20px_rgba(207,68,75,0.250)]">X</span>
        </span>
        <span className="relative">
          과거 레시피내역
          <span className="absolute -top-[20px] left-[142px] flex h-[34px] w-[69px] items-center justify-center rounded-[14px] bg-[#f6c144] text-[20px] font-bold text-black shadow-[0_24px_20px_rgba(246,193,68,0.150)]">New</span>
        </span>
      </nav>
      <div className="ml-auto mr-[60px] flex items-center">
        <span className="flex h-[53px] w-[92px] items-center justify-end rounded-full bg-[#f9cb4d] pr-[9px]">
          <span className="h-[37px] w-[37px] rounded-full bg-white" />
        </span>
        <span className="ml-[14px] w-[59px] pb-[5px] text-[31px] font-medium leading-none text-[#f9cb4d]">베타</span>
        <span className="ml-[25px] flex h-[60px] w-[132px] items-center rounded-full bg-[#37353d] pl-[13px]">
          <MdWbTwilight size={48} color="#70d789" />
          <MdKeyOff size={48} color="#e54a50" className="ml-[10px]" />
        </span>
        <span className="ml-[26px] flex h-[60px] w-[132px] items-center rounded-full bg-[#37353d] pl-[14px]">
          <MdManageHistory size={48} color="#67666a" />
        </span>
        <MdSettings size={48} color="#e2e2e2" className="ml-[380px]" />
      </div>
      <div className="absolute left-[2795px] top-[12px] z-10 flex h-[196px] w-[464px] flex-col rounded-[12px] border border-[#c4c1c4] bg-[#b6b2b6] pl-[17px] pt-[10px] font-['Inter','Noto_Sans_CJK_KR',sans-serif] text-[26.300px] leading-[44px] text-[#1b1a1c] shadow-[0_10px_30px_rgba(0,0,0,0.500)]">
        {SNAPSHOTS.map((s, i) => (
          <div key={s} className="flex items-center tracking-[-0.250px]">
            <span className="flex w-[30px]">
              {i === 0 && <svg viewBox="0 0 20 20" className="h-[20px] w-[20px]" fill="none" stroke="#1b1a1c" strokeWidth="3.400" strokeLinecap="round" strokeLinejoin="round"><path d="M2 11l5 7L17.500 2" /></svg>}
            </span>
            {s}
          </div>
        ))}
      </div>
    </header>
  );
}

export default function App() {
  return (
    <div className="h-[1832px] w-[3360px] overflow-hidden border-b border-l border-[#35353a] bg-[#18171b] font-['Noto_Sans_CJK_KR',sans-serif]">
      <div className="h-[4px] border-b-2 border-[#d9dade] bg-white" />
      <Header />
      <main className="ml-[97px] flex gap-[37px] pt-[24px]">
        <section className="w-[1564px] shrink-0">
          <div className="mb-[8px] flex h-[76px] items-center">
            <h2 className={`${TITLE} pb-[2px]`}>실시간 코인 시세</h2>
            <BinanceBadge className="ml-[22px]" />
            <span className="ml-auto text-[26.700px] leading-none text-[#929294]">* 환율: 1323.84KRW/USD</span>
          </div>
          <div className="grid grid-cols-4 gap-[14px]">
            {PRICES.map((p) => <PriceCard key={p.id} {...p} />)}
          </div>

          <div className="mb-[8px] mt-[86px] flex h-[76px] items-center">
            <h2 className={`${TITLE} pb-[2px] tracking-[-0.150px]`}>실시간 Long/short(롱/숏)</h2>
            <BinanceBadge className="ml-[20px]" />
            <Selects />
          </div>
          <div className="grid grid-cols-4 gap-[14px]">
            {DONUTS.map((d) => (
              <div key={d.name} className={`${CARD} flex h-[370px] flex-col items-center`}>
                <h3 className="flex h-[76px] items-center pt-[3px] text-[26.800px] font-bold leading-none text-[#dedede]">{d.name}</h3>
                <Donut {...d} />
              </div>
            ))}
          </div>

          <div className="mb-[8px] mt-[95px] flex h-[76px] items-center">
            <h2 className={`${TITLE} pb-[2px]`}>실시간 미결제약정 현황</h2>
            <BinanceBadge className="ml-[21px]" />
            <Selects />
          </div>
          <div className={`${CARD} overflow-hidden`}>
            <OpenInterestChart />
          </div>
        </section>

        <section className="w-[1564px] shrink-0">
          <div className="mb-[8px] flex h-[76px] items-center">
            <h2 className={`${TITLE} w-[102px] pb-[2px]`}>레시피</h2>
            <div className={`${SELECT} w-[141px] pl-[28px] text-[28.800px] font-bold text-[#76c893]`}>
              <span className="w-[71px]">BUY</span>
              <Chevron />
            </div>
            <h2 className={`${TITLE} ml-[10px] w-[83px] pb-[2px]`}>분석</h2>
            <BinanceBadge />
            <div className={`${TITLE} ml-[21px] flex h-[76px] w-[224px] items-center justify-between border-2 border-[#4b4a52] bg-[#37353e] pl-[8px] pr-[13px]`}>
              <span>기울기</span>
              <span className="text-[#e8484e]">-0.25</span>
            </div>
            <span className="ml-[422px] pt-[8px] text-[25.600px] leading-none text-[#929294]">마지막</span>
          </div>
          <div className="grid grid-cols-[530px_504px_502px] gap-[14px]">
            {TOPS.map((t) => (
              <div key={t.title} className={`${CARD} h-[370px] text-[25.600px] leading-none text-[#dedede]`}>
                <h3 className="flex h-[79px] items-center justify-center text-[26.900px] font-medium">{t.title} Top 3</h3>
                <div className={`grid h-[52px] items-center justify-items-center font-bold ${t.cols}`}>
                  <span /><span>순위</span><span>코인</span><span>{t.title}</span>
                </div>
                {t.rows.map(([id, v], i) => (
                  <div key={id} className={`grid h-[71.500px] items-center justify-items-center ${t.cols}`}>
                    <span>{i + 1}</span>
                    <SmallCoin id={id} />
                    <span>{id}</span>
                    {v === '★' ? <Stars /> : <span>{v}</span>}
                  </div>
                ))}
              </div>
            ))}
          </div>
          <div className={`${CARD} mt-[86px] flex overflow-hidden`}>
            <ScatterChart />
            <CoinTable />
          </div>
        </section>
      </main>
    </div>
  );
}
